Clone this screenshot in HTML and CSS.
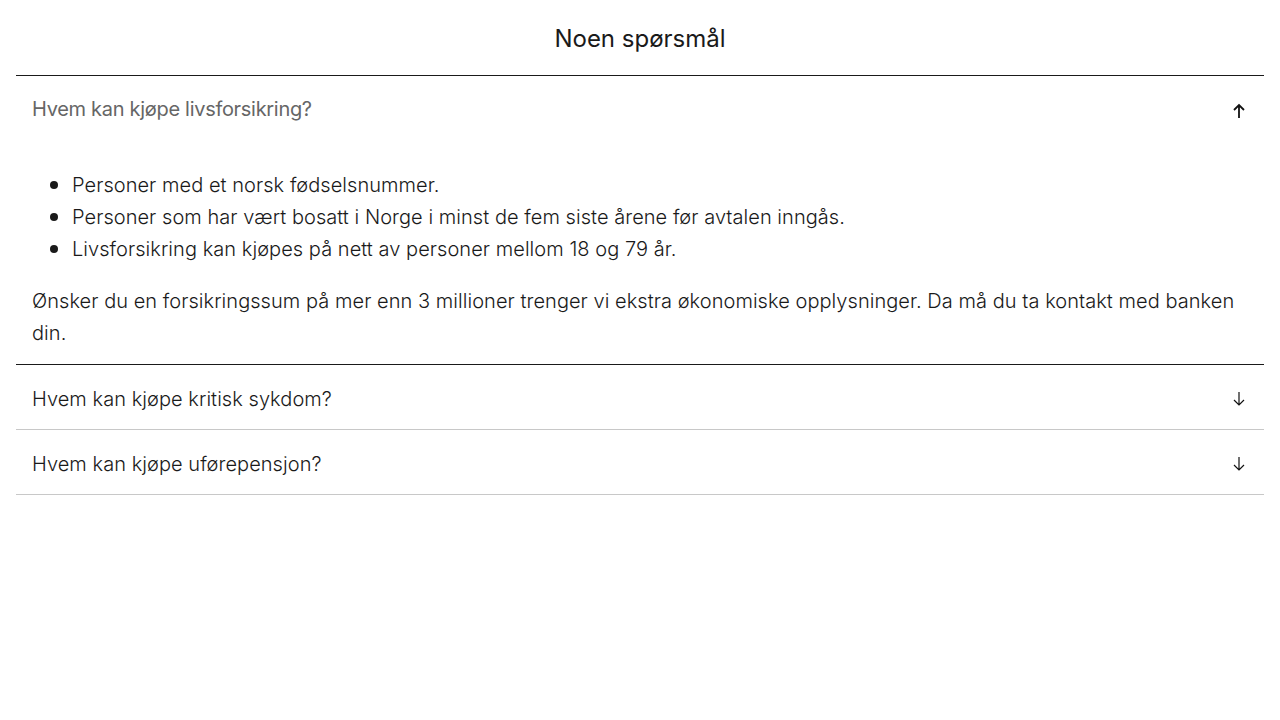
FILE: index.html
```html
<!DOCTYPE html>
<html lang="no">
<head>
<meta charset="utf-8">
<title>Noen spørsmål</title>
<link rel="stylesheet" href="styles.css">
</head>
<body>
<main class="faq">
  <h2 class="faq-title">Noen spørsmål</h2>
  <div class="faq-list">
    <details class="faq-item faq-item--open" open>
      <summary class="faq-q faq-q--open">
        <span>Hvem kan kjøpe livsforsikring?</span>
        <svg class="arrow arrow--bold" width="14" height="16" viewBox="0 0 14 16" aria-hidden="true"><path d="M7 15V2M2 7l5-5 5 5" fill="none" stroke="#111" stroke-width="1.8"/></svg>
      </summary>
      <div class="faq-a">
        <ul class="faq-ul">
          <li>Personer med et norsk fødselsnummer.</li>
          <li>Personer som har vært bosatt i Norge i minst de fem siste årene før avtalen inngås.</li>
          <li>Livsforsikring kan kjøpes på nett av personer mellom 18 og 79 år.</li>
        </ul>
        <p class="faq-p">Ønsker du en forsikringssum på mer enn 3 millioner trenger vi ekstra økonomiske opplysninger. Da må du ta kontakt med banken din.</p>
      </div>
    </details>
    <details class="faq-item">
      <summary class="faq-q">
        <span>Hvem kan kjøpe kritisk sykdom?</span>
        <svg class="arrow" width="14" height="16" viewBox="0 0 14 16" aria-hidden="true"><path d="M7 1v13M2 9l5 5 5-5" fill="none" stroke="#111" stroke-width="1.2"/></svg>
      </summary>
    </details>
    <details class="faq-item">
      <summary class="faq-q">
        <span>Hvem kan kjøpe uførepensjon?</span>
        <svg class="arrow" width="14" height="16" viewBox="0 0 14 16" aria-hidden="true"><path d="M7 1v13M2 9l5 5 5-5" fill="none" stroke="#111" stroke-width="1.2"/></svg>
      </summary>
    </details>
  </div>
</main>
</body>
</html>
```
FILE: styles.css
```css
* { box-sizing: border-box; }
html, body { margin: 0; padding: 0; background: #fff; }
body {
  font-family: "Inter", "Liberation Sans", sans-serif;
  color: #1a1a1a;
}
.faq { padding: 0 16px; }
.faq-title {
  margin: 0;
  height: 75px;
  padding-top: 22px;
  text-align: center;
  font-size: 24px;
  line-height: 34px;
  font-weight: 400;
  color: #1a1a1a;
}
.faq-list { border-top: 1px solid #1a1a1a; }
.faq-item { border-bottom: 1px solid #c8c8c8; }
.faq-item--open { border-bottom-color: #1a1a1a; }
.faq-q {
  list-style: none;
  display: flex;
  justify-content: space-between;
  align-items: center;
  height: 64px;
  padding: 3px 18px 0 16px;
  font-size: 20px;
  font-weight: 300;
  letter-spacing: 0.05px;
  cursor: pointer;
}
.faq-q::-webkit-details-marker { display: none; }
.faq-q--open {
  align-items: flex-start;
  padding-top: 21px;
  color: #666;
  font-weight: 400;
  letter-spacing: -0.3px;
}
.faq-q--open .arrow { margin-top: 6px; }
.faq-a {
  padding: 0 16px 15px;
  font-size: 20px;
  font-weight: 300;
  line-height: 32px;
  letter-spacing: 0.05px;
}
.faq-ul { margin: 29px 0 20px; padding-left: 40px; list-style: none; }
.faq-ul li::before {
  content: "";
  display: inline-block;
  width: 8px;
  height: 8px;
  border-radius: 50%;
  background: #1a1a1a;
  margin: 0 14px 0 -22px;
  vertical-align: 3px;
}
.faq-p { margin: 0; }
```
